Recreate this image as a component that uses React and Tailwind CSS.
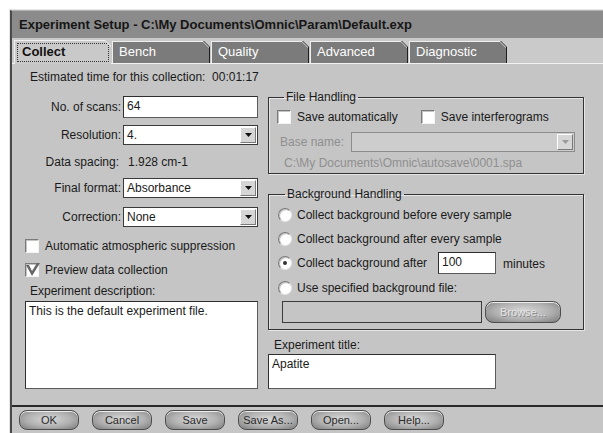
import React from 'react';

const Check = ({ checked }) => (
  <span className="relative block h-[14px] w-[14px] shrink-0 border border-t-[#7a7a7a] border-l-[#7a7a7a] border-b-[#f4f4f4] border-r-[#f4f4f4] bg-white shadow-[inset_1px_1px_0_#c4c4c4]">
    {checked && (
      <svg className="absolute -left-[1px] -top-[2px]" width="15" height="15" viewBox="0 0 15 15">
        <path d="M1 3 L4 3 L7 9 L12 1 L15 1 L7 14 Z" fill="#666" />
      </svg>
    )}
  </span>
);

const Radio = ({ on }) => (
  <span className="flex h-[14px] w-[14px] shrink-0 items-center justify-center rounded-full border border-t-[#7a7a7a] border-l-[#7a7a7a] border-b-[#e6e6e6] border-r-[#e6e6e6] bg-white shadow-[inset_1px_1px_1px_#b8b8b8]">
    {on && <span className="block h-[4px] w-[4px] rounded-full bg-[#333]" />}
  </span>
);

const Arrow = ({ disabled }) => (
  <div className="mr-[1px] flex h-[16px] w-[16px] items-center justify-center border border-t-white border-l-white border-b-[#7a7a7a] border-r-[#7a7a7a] bg-[#d6d6d6]">
    <svg width="7" height="4" viewBox="0 0 7 4">
      <path d="M0 0 H7 L3.5 4 Z" fill={disabled ? '#9a9a9a' : '#111'} />
    </svg>
  </div>
);

const Select = ({ value, disabled, className = '' }) => (
  <div
    className={`flex h-[20px] items-center border ${
      disabled ? 'border-[#8c8c8c] bg-[#cdcdcd]' : 'border-[#3a3a3a] bg-white'
    } ${className}`}
  >
    <span className="flex-1 pl-[3px] leading-[14px]">{value}</span>
    <Arrow disabled={disabled} />
  </div>
);

const Field = ({ value, className = '' }) => (
  <div className={`border border-t-[#2e2e2e] border-l-[#2e2e2e] border-b-[#5a5a5a] border-r-[#5a5a5a] bg-white pl-[3px] pt-[2px] leading-[14px] ${className}`}>
    {value}
  </div>
);

const Button = ({ children, disabled, className = '' }) => (
  <div
    className={`flex h-[20px] items-center justify-center rounded-[8px] border border-[#4d4d4d] bg-[radial-gradient(ellipse_at_50%_45%,#d9d9d9_0%,#b0b0b0_55%,#7a7a7a_100%)] text-[11px] shadow-[inset_0_1px_0_#eeeeee] ${
      disabled ? 'text-[#e2e2e2] [text-shadow:1px_1px_0_#8a8a8a]' : 'text-[#2a2a2a]'
    } ${className}`}
  >
    {children}
  </div>
);

const tabs = ['Collect', 'Bench', 'Quality', 'Advanced', 'Diagnostic'];

const Tab = ({ label, active }) =>
  active ? (
    <div className="relative -mb-px h-[24px] w-[97px] bg-[#f0f0f0] pl-px pt-px [clip-path:polygon(0_0,calc(100%-6px)_0,100%_6px,100%_100%,0_100%)]">
      <div className="h-full bg-[#c9c9c9] p-[2px] [clip-path:polygon(0_0,calc(100%-6px)_0,100%_6px,100%_100%,0_100%)]">
        <div className="h-full border border-dotted border-[#333] pl-[4px] text-[13px] font-bold leading-[16px] text-[#111]">{label}</div>
      </div>
    </div>
  ) : (
    <div className="h-[22px] w-[98px] bg-[#1e1e1e] [clip-path:polygon(0_0,calc(100%-6px)_0,100%_6px,100%_100%,0_100%)]">
      <div className="h-full w-[97px] bg-[#eeeeee] pl-px pt-px [clip-path:polygon(0_0,calc(100%-6px)_0,100%_6px,100%_100%,0_100%)]">
        <div className="h-full bg-[#7b7b7b] pl-[6px] pt-[2px] text-[13px] leading-[15px] text-white [clip-path:polygon(0_0,calc(100%-6px)_0,100%_6px,100%_100%,0_100%)]">
          {label}
        </div>
      </div>
    </div>
  );

const LabeledRow = ({ label, children, className = '' }) => (
  <div className={`flex items-center gap-[2px] ${className}`}>
    <span className="w-[109px] text-right">{label}</span>
    {children}
  </div>
);

export default function App() {
  return (
    <div className="h-[433px] w-[603px] overflow-hidden bg-white pl-[9px] pt-[9px] font-['Liberation_Sans',Arial,sans-serif] text-[12px] leading-[14px] text-[#1a1a1a]">
      <div className="h-full border-l border-t border-[#e4e4e4] bg-[#c5c5c5]">
        <div className="flex h-full flex-col border-l-2 border-t border-l-[#4a4a4a] border-t-[#b4b4b4]">
          {/* title bar */}
          <div className="flex h-[27px] shrink-0 items-center bg-[#8b8b8b] pl-[7px] text-[13px] font-bold text-[#161616]">
            Experiment Setup - C:\My Documents\Omnic\Param\Default.exp
          </div>

          {/* tab strip */}
          <div className="flex h-[26px] shrink-0 items-end gap-[1px] border-b border-[#f2f2f2] bg-[#cacaca] pl-[2px]">
            {tabs.map((t, i) => (
              <Tab key={t} label={t} active={i === 0} />
            ))}
          </div>

          {/* collect page */}
          <div className="h-[341px] shrink-0 pt-[6px]">
            <div className="pl-[18px]">Estimated time for this collection:&nbsp; 00:01:17</div>

            <div className="flex">
              {/* left column */}
              <div className="flex w-[250px] flex-col">
                <LabeledRow label="No. of scans:" className="mt-[12px]">
                  <Field value="64" className="h-[22px] w-[135px]" />
                </LabeledRow>
                <LabeledRow label="Resolution:" className="mt-[7px]">
                  <Select value="4." className="w-[135px]" />
                </LabeledRow>
                <div className="mt-[9px] flex h-[16px] items-center">
                  <span className="w-[107px] text-right">Data spacing:</span>
                  <span className="ml-[9px]">1.928 cm-1</span>
                </div>
                <LabeledRow label="Final format:" className="mt-[8px]">
                  <Select value="Absorbance" className="w-[135px]" />
                </LabeledRow>
                <LabeledRow label="Correction:" className="mt-[9px]">
                  <Select value="None" className="w-[135px]" />
                </LabeledRow>
                <div className="mt-[12px] flex items-center gap-[6px] pl-[13px]">
                  <Check />
                  <span>Automatic atmospheric suppression</span>
                </div>
                <div className="mt-[10px] flex items-center gap-[6px] pl-[13px]">
                  <Check checked />
                  <span>Preview data collection</span>
                </div>
                <div className="mt-[7px] pl-[18px]">Experiment description:</div>
                <Field value="This is the default experiment file." className="ml-[13px] mt-[3px] h-[88px] w-[233px]" />
              </div>

              {/* right column */}
              <div className="ml-[6px] mt-[6px] flex w-[316px] flex-col">
                <fieldset className="border border-[#333] pb-[3px] pl-[8px] pt-[6px] shadow-[1px_1px_0_#e6e6e6,inset_1px_1px_0_#e6e6e6]">
                  <legend className="ml-[7px] px-[2px]">File Handling</legend>
                  <div className="flex items-center">
                    <Check />
                    <span className="ml-[6px]">Save automatically</span>
                    <span className="ml-[23px]"><Check /></span>
                    <span className="ml-[6px]">Save interferograms</span>
                  </div>
                  <div className="mt-[8px] flex items-center text-[#8f8f8f]">
                    <span className="ml-[3px] w-[71px]">Base name:</span>
                    <Select disabled className="w-[224px]" />
                  </div>
                  <div className="mt-[4px] pl-[7px] text-[#8f8f8f]">C:\My Documents\Omnic\autosave\0001.spa</div>
                </fieldset>

                <fieldset className="mt-[13px] border border-[#333] pb-[6px] pl-[9px] pt-[7px] shadow-[1px_1px_0_#e6e6e6,inset_1px_1px_0_#e6e6e6]">
                  <legend className="ml-[7px] px-[2px]">Background Handling</legend>
                  <div className="flex items-center gap-[5px]">
                    <Radio />
                    <span>Collect background before every sample</span>
                  </div>
                  <div className="mt-[10px] flex items-center gap-[5px]">
                    <Radio />
                    <span>Collect background after every sample</span>
                  </div>
                  <div className="mt-[6px] flex items-center">
                    <Radio on />
                    <span className="ml-[5px] w-[141px]">Collect background after</span>
                    <Field value="100" className="h-[22px] w-[58px]" />
                    <span className="ml-[7px] pt-[2px]">minutes</span>
                  </div>
                  <div className="mt-[7px] flex items-center gap-[5px]">
                    <Radio />
                    <span>Use specified background file:</span>
                  </div>
                  <div className="mt-[6px] flex items-center pl-[4px]">
                    <div className="h-[22px] w-[200px] border border-[#3c3c3c] bg-[#c5c5c5]" />
                    <Button disabled className="ml-[3px] h-[22px] w-[76px]">Browse...</Button>
                  </div>
                </fieldset>

                <div className="mt-[8px] pl-[6px]">Experiment title:</div>
                <Field value="Apatite" className="mt-[2px] h-[35px] w-[228px]" />
              </div>
            </div>
          </div>

          {/* dialog buttons */}
          <div className="flex flex-1 gap-[13px] border-t-2 border-[#2a2a2a] pl-[7px] pt-[3px]">
            {['OK', 'Cancel', 'Save', 'Save As...', 'Open...', 'Help...'].map((b) => (
              <Button key={b} className="w-[60px]">{b}</Button>
            ))}
          </div>
        </div>
      </div>
    </div>
  );
}
